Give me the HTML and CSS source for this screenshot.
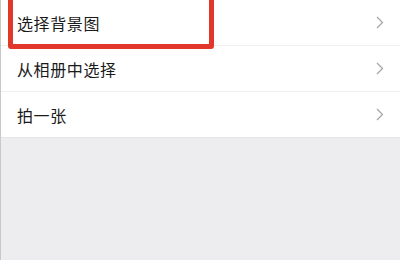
FILE: index.html
```html
<!DOCTYPE html>
<html lang="zh">
<head>
<meta charset="utf-8">
<link rel="stylesheet" href="styles.css">
</head>
<body>
<div class="page">
  <ul class="menu">
    <li class="row first">
      <span class="label">选择背景图</span>
      <svg class="chev" width="8" height="13" viewBox="0 0 8 13"><path d="M1 1 L6.5 6.5 L1 12" fill="none" stroke="#a3a3a3" stroke-width="1.2"/></svg>
      <div class="highlight"></div>
    </li>
    <li class="row">
      <span class="label">从相册中选择</span>
      <svg class="chev" width="8" height="13" viewBox="0 0 8 13"><path d="M1 1 L6.5 6.5 L1 12" fill="none" stroke="#a3a3a3" stroke-width="1.2"/></svg>
    </li>
    <li class="row">
      <span class="label">拍一张</span>
      <svg class="chev" width="8" height="13" viewBox="0 0 8 13"><path d="M1 1 L6.5 6.5 L1 12" fill="none" stroke="#a3a3a3" stroke-width="1.2"/></svg>
    </li>
  </ul>
</div>
</body>
</html>
```
FILE: styles.css
```css
html, body {
  margin: 0;
  padding: 0;
}
body {
  width: 400px;
  height: 260px;
  overflow: hidden;
  background: #ededef;
  font-family: "Noto Sans CJK SC", "Noto Sans", sans-serif;
}
.page {
  height: 260px;
  border-left: 1px solid #c8c8c8;
  box-sizing: border-box;
}
.menu {
  list-style: none;
  margin: 0;
  padding: 0;
  background: #fff;
}
.row {
  position: relative;
  height: 46px;
  display: flex;
  align-items: center;
  justify-content: space-between;
  padding: 0 16px 0 16px;
  border-bottom: 1px solid #efefef;
  box-sizing: border-box;
}
.row:last-child {
  border-bottom: 1px solid #e4e4e4;
}
.label {
  font-size: 16px;
  color: #1a1a1a;
  letter-spacing: 0.6px;
  padding-top: 1px;
}
.chev {
  display: block;
}
.highlight {
  position: absolute;
  left: 7px;
  top: -6px;
  width: 196px;
  height: 45px;
  border: 5px solid #e2382c;
  border-radius: 3px;
  pointer-events: none;
}
```
